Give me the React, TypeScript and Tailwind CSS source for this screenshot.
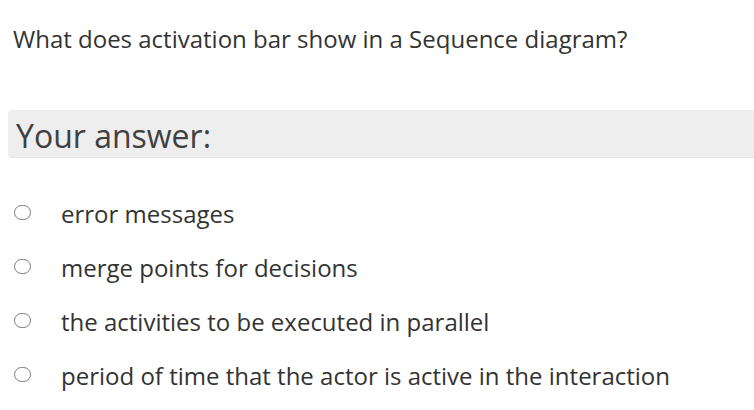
import React from "react";

const options = [
  "error messages",
  "merge points for decisions",
  "the activities to be executed in parallel",
  "period of time that the actor is active in the interaction",
];

export default function App() {
  return (
    <div
      className="w-[754px] h-[410px] bg-white overflow-hidden text-[#333333]"
      style={{ fontFamily: '"Open Sans", sans-serif' }}
    >
      <div className="pt-[24px] pl-[13px] text-[24px] leading-[30px] text-[#333333]">
        What does activation bar show in a Sequence diagram?
      </div>
      <div className="mt-[56px] ml-[8px] h-[48px] bg-[#eeeeee] rounded-l-[4px] pt-[10px] pl-[8px] border-b border-[#e6e6e6]">
        <span className="block text-[32px] leading-[32px] text-[#404040]">Your answer:</span>
      </div>
      <div className="mt-[27px] flex flex-col">
        {options.map((o) => (
          <div key={o} className="flex items-center h-[54px]">
            <div className="ml-[14px] w-[17px] h-[15px] rounded-full border-[1.5px] border-[#7a7a7a] bg-white" />
            <span className="ml-[30px] mt-[4px] text-[24px] leading-[28px] text-[#333333]">{o}</span>
          </div>
        ))}
      </div>
    </div>
  );
}
